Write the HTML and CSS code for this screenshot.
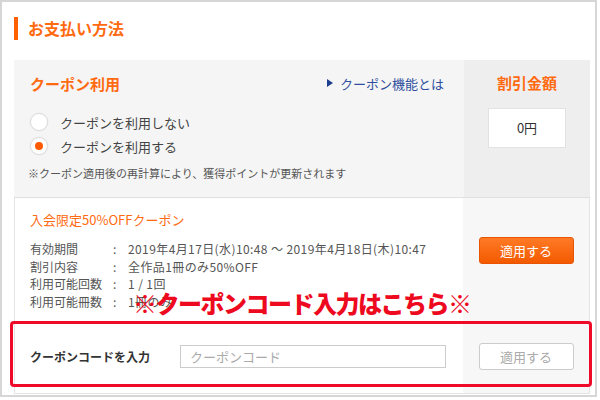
FILE: index.html
```html
<!DOCTYPE html>
<html lang="ja">
<head>
  <meta charset="UTF-8" />
  <title>お支払い方法</title>
  <link rel="stylesheet" href="styles.css">
</head>
<body>
  <div class="frame">
    <h2 class="title">お支払い方法</h2>

    <div class="panel">
      <div class="use">
        <div class="use-main">
          <div class="use-head">
            <span class="use-title">クーポン利用</span>
            <a class="help-link" href="#"><span class="tri"></span>クーポン機能とは</a>
          </div>
          <label class="radio"><span class="dot"></span>クーポンを利用しない</label>
          <label class="radio"><span class="dot checked"></span>クーポンを利用する</label>
          <p class="note">※クーポン適用後の再計算により、獲得ポイントが更新されます</p>
        </div>
        <div class="amount">
          <div class="amount-title">割引金額</div>
          <div class="amount-box">0円</div>
        </div>
      </div>

      <div class="coupon">
        <div class="coupon-main">
          <div class="coupon-name">入会限定50%OFFクーポン</div>
          <dl class="details">
            <dt>有効期間</dt><dd>2019年4月17日(水)10:48 ～ 2019年4月18日(木)10:47</dd>
            <dt>割引内容</dt><dd>全作品1冊のみ50%OFF</dd>
            <dt>利用可能回数</dt><dd>1 / 1回</dd>
            <dt>利用可能冊数</dt><dd>1冊のみ</dd>
          </dl>
        </div>
        <div class="coupon-side">
          <button class="btn btn-apply">適用する</button>
        </div>

        <div class="code-main">
          <span class="code-label">クーポンコードを入力</span>
          <input class="code-input" type="text" placeholder="クーポンコード">
        </div>
        <div class="code-side">
          <button class="btn btn-disabled">適用する</button>
        </div>
      </div>
    </div>

    <div class="callout">※クーポンコード入力はこちら※</div>
    <div class="callout-box"></div>
  </div>
</body>
</html>
```

FILE: styles.css
```css
body { margin: 0; background: #fff; font-family: "Noto Sans CJK JP", "Noto Sans", sans-serif; color: #444; }

.frame { position: relative; box-sizing: border-box; width: 597px; height: 397px; border: 2px solid #d6d6d6; }

.title { margin: 15px 0 0 12px; padding-left: 10px; border-left: 4px solid #ff6000; height: 23px; line-height: 23px; font-size: 16px; font-weight: bold; color: #ff6a10; }

.panel { margin: 20px 0 0 12px; width: 576px; }

.use { display: flex; height: 137px; background: #f5f5f5; }
.use-main { flex: 1; padding: 14px 20px 0 16px; }
.use-head { display: flex; justify-content: space-between; align-items: center; height: 18px; margin-bottom: 18px; }
.use-title { font-size: 15px; font-weight: bold; color: #ff6a10; }
.help-link { font-size: 13px; color: #2f4f9e; text-decoration: none; display: flex; align-items: center; }
.tri { width: 0; height: 0; border-left: 6px solid #1d3d8f; border-top: 4px solid transparent; border-bottom: 4px solid transparent; margin-right: 7px; }

.radio { display: flex; align-items: center; height: 24px; font-size: 13px; color: #444; }
.dot { box-sizing: border-box; width: 18px; height: 18px; border-radius: 50%; border: 1px solid #ddd; background: #fff; margin-right: 12px; position: relative; box-shadow: 0 0 2px rgba(0,0,0,0.08); }
.dot.checked::after { content: ""; position: absolute; left: 4px; top: 4px; width: 8px; height: 8px; border-radius: 50%; background: #ff5a00; }
.note { margin: 7px 0 0 -2px; font-size: 11px; color: #555; }

.amount { width: 126px; background: #eeeeee; display: flex; flex-direction: column; align-items: center; padding-top: 14px; }
.amount-title { font-size: 15px; font-weight: bold; color: #ff6a10; height: 18px; line-height: 18px; }
.amount-box { box-sizing: border-box; margin-top: 16px; width: 78px; height: 40px; line-height: 38px; text-align: center; background: #fff; border: 1px solid #e2e2e2; font-size: 13px; color: #333; }

.coupon { display: grid; grid-template-columns: 1fr 126px; grid-template-rows: 122px 73px; border: 1px solid #e4e4e4; border-top-color: #e0e0e0; }
.coupon-main { padding: 13px 16px 0 15px; background: #fff; }
.coupon-name { font-size: 13px; color: #ff6a10; height: 18px; line-height: 18px; margin-bottom: 11px; }
.details { display: grid; grid-template-columns: 83px 15px auto; margin: 0; font-size: 12px; line-height: 17.5px; color: #555; }
.details dt { display: contents; }
.details dt::after { content: ":"; }
.details dd { grid-column: 3; margin: 0; letter-spacing: 0.4px; }
.coupon-side, .code-side { background: #f7f7f7; display: flex; justify-content: center; }
.coupon-side { padding-top: 39px; align-items: flex-start; }

.code-main { display: flex; align-items: center; padding-left: 15px; background: #fff; }
.code-label { font-size: 12px; font-weight: bold; color: #333; width: 150px; }
.code-input { box-sizing: border-box; width: 266px; height: 23px; border: 1px solid #ccc; padding: 0 9px; font-family: inherit; font-size: 13px; }
.code-input::placeholder { color: #aaa; }
.code-side { align-items: center; }

.btn { box-sizing: border-box; width: 95px; height: 27px; border-radius: 3px; font-family: inherit; font-size: 13px; }
.btn-apply { border: 1px solid #e85400; background: linear-gradient(#ff7a26, #f35a00); color: #fff; }
.btn-disabled { border: 1px solid #ccc; background: #fff; color: #aaa; }

.callout { position: absolute; left: 131px; top: 286px; font-size: 24px; font-weight: 900; color: #ee0a1e; line-height: 30px; letter-spacing: -1.5px; }
.callout-box { position: absolute; left: 8px; top: 319px; width: 582px; height: 66px; box-sizing: border-box; border: 3px solid #f00a2a; border-radius: 4px; }
```
